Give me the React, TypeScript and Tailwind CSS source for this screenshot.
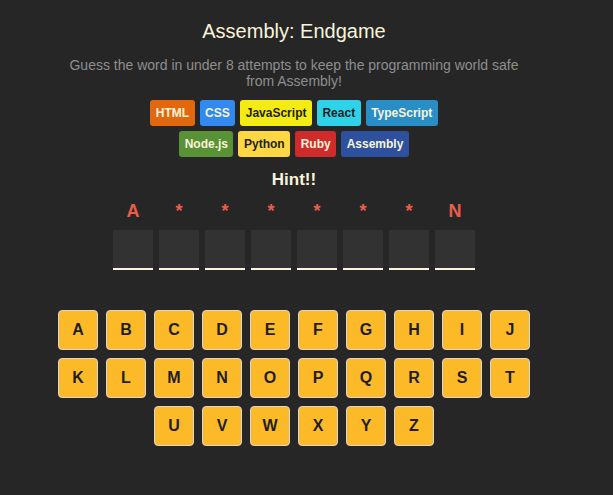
const LANGUAGES = [
  { name: 'HTML', bg: 'bg-[#E2680F]', fg: 'text-[#F9F4DA]' },
  { name: 'CSS', bg: 'bg-[#328AF1]', fg: 'text-[#F9F4DA]' },
  { name: 'JavaScript', bg: 'bg-[#F4EB13]', fg: 'text-[#1E1E1E]' },
  { name: 'React', bg: 'bg-[#2ED3E9]', fg: 'text-[#1E1E1E]' },
  { name: 'TypeScript', bg: 'bg-[#298EC6]', fg: 'text-[#F9F4DA]' },
  { name: 'Node.js', bg: 'bg-[#599137]', fg: 'text-[#F9F4DA]' },
  { name: 'Python', bg: 'bg-[#FFD742]', fg: 'text-[#1E1E1E]' },
  { name: 'Ruby', bg: 'bg-[#D02B2B]', fg: 'text-[#F9F4DA]' },
  { name: 'Assembly', bg: 'bg-[#2D519F]', fg: 'text-[#F9F4DA]' },
];

const HINT = ['A', '*', '*', '*', '*', '*', '*', 'N'];

const ALPHABET = 'ABCDEFGHIJKLMNOPQRSTUVWXYZ'.split('');

export default function App() {
  return (
    <div className="min-h-screen bg-[#262626] font-['Liberation_Sans',Arial,sans-serif]">
      <main className="w-[588px] flex flex-col items-center">
        {/* Header */}
        <h1 className="mt-[20px] text-[20px] leading-[23px] text-[#F9F4DA]">Assembly: Endgame</h1>
        <p className="mt-[14px] max-w-[460px] text-center text-[14px] leading-[16px] text-[#8E8E8E]">
          Guess the word in under 8 attempts to keep the programming world safe from Assembly!
        </p>

        {/* Language chips */}
        <section className="mt-[11px] w-[310px] flex flex-wrap justify-center gap-[5px]">
          {LANGUAGES.map(lang => (
            <span
              key={lang.name}
              className={`h-[26px] px-[5.5px] flex items-center rounded-[3px] text-[12px] font-bold ${lang.bg} ${lang.fg}`}
            >
              {lang.name}
            </span>
          ))}
        </section>

        {/* Hint */}
        <h2 className="mt-[13px] text-[17px] leading-[20px] font-bold text-[#F9F4DA]">Hint!!</h2>

        <div className="mt-[11px] flex gap-[6px]">
          {HINT.map((ch, i) => (
            <span key={i} className="w-[40px] text-center text-[18px] leading-[21px] font-bold text-[#EC5D49]">
              {ch}
            </span>
          ))}
        </div>

        {/* Word slots */}
        <div className="mt-[8px] flex gap-[6px]">
          {HINT.map((_, i) => (
            <span key={i} className="w-[40px] h-[40px] bg-[#323232] border-b-2 border-[#F9F4DA]" />
          ))}
        </div>

        {/* Keyboard */}
        <div className="mt-[40px] w-[480px] flex flex-wrap justify-center gap-[8px]">
          {ALPHABET.map(letter => (
            <button
              key={letter}
              className="w-[40px] h-[40px] flex items-center justify-center rounded-[4px] border border-[#D7D7D7] bg-[#FCBA29] text-[16px] font-bold text-[#1E1E1E]"
            >
              {letter}
            </button>
          ))}
        </div>
      </main>
    </div>
  );
}
